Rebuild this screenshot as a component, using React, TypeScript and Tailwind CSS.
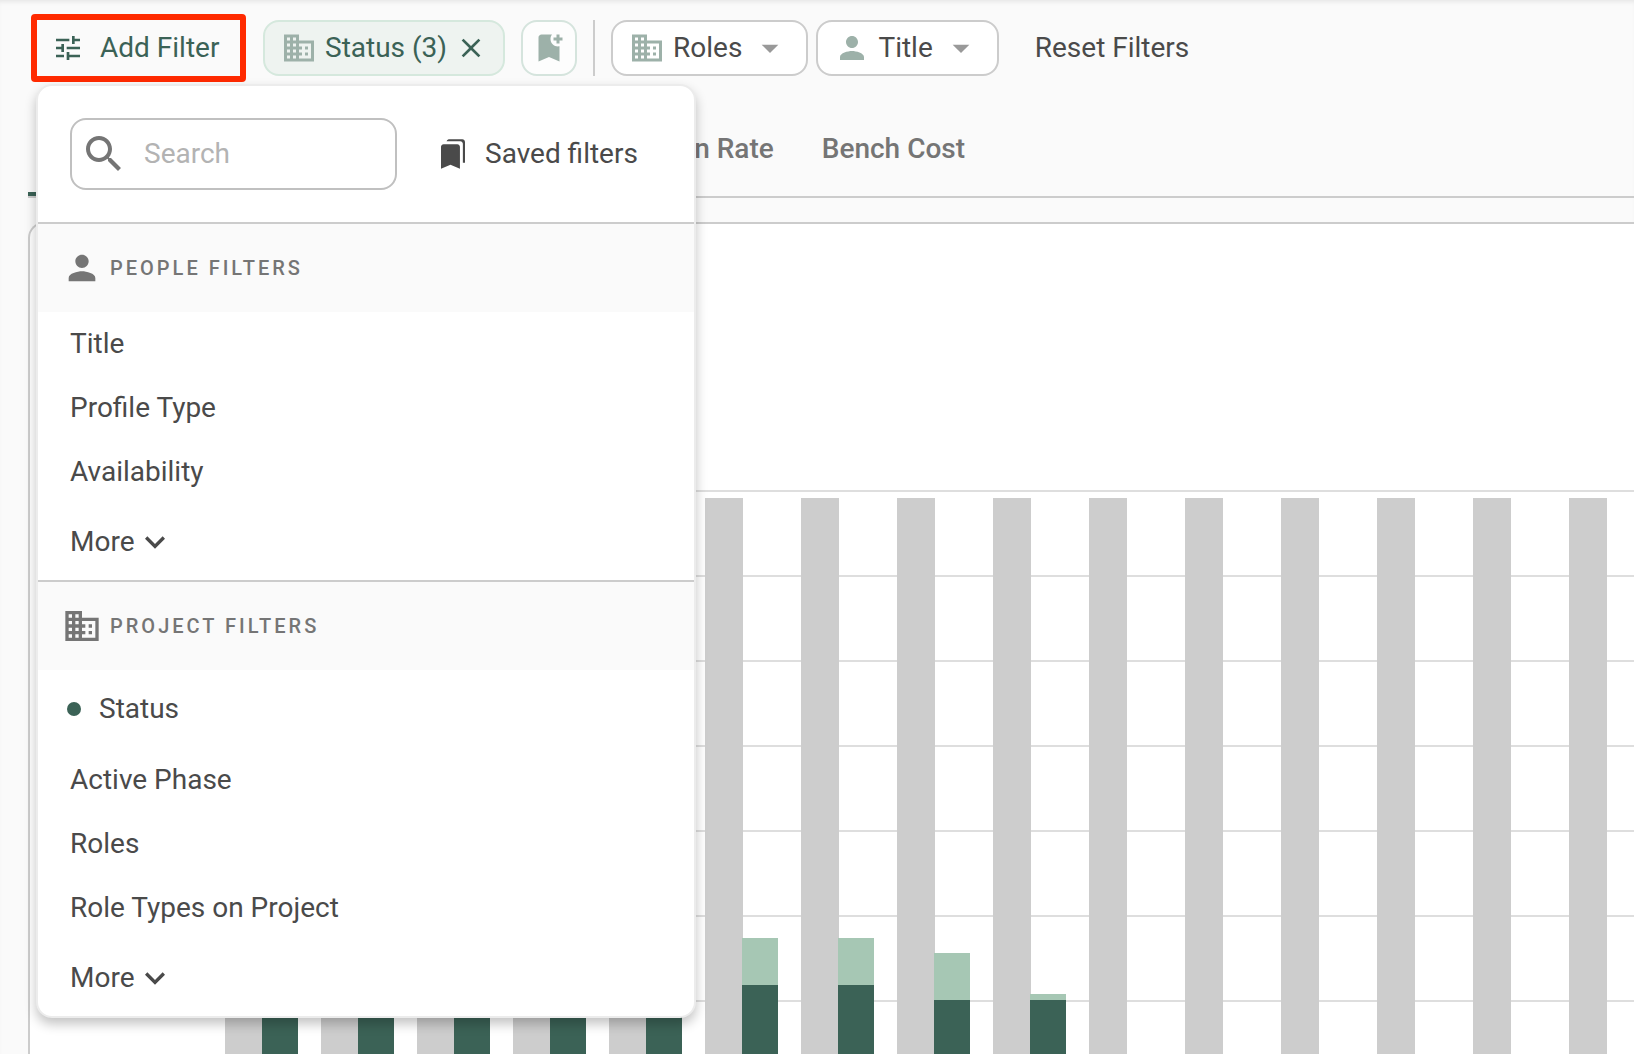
import React from "react";

type IconProps = { d: string; className?: string };

function Icon({ d, className = "" }: IconProps) {
  return (
    <svg viewBox="0 0 24 24" fill="currentColor" aria-hidden="true" className={`shrink-0 ${className}`}>
      <path d={d} />
    </svg>
  );
}

const ICONS = {
  tune: "M3 17v2h6v-2H3zM3 5v2h10V5H3zm10 16v-2h8v-2h-8v-2h-2v6h2zM7 9v2H3v2h4v2h2V9H7zm14 4v-2H11v2h10zm-6-4h2V7h4V5h-4V3h-2v6z",
  building:
    "M12 7V3H2v18h20V7H12zM6 19H4v-2h2v2zm0-4H4v-2h2v2zm0-4H4V9h2v2zm0-4H4V5h2v2zm4 12H8v-2h2v2zm0-4H8v-2h2v2zm0-4H8V9h2v2zm0-4H8V5h2v2zm10 12h-8v-2h2v-2h-2v-2h2v-2h-2V9h8v10zm-2-8h-2v2h2v-2zm0 4h-2v2h2v-2z",
  close:
    "M19 6.41L17.59 5 12 10.59 6.41 5 5 6.41 10.59 12 5 17.59 6.41 19 12 13.41 17.59 19 19 17.59 13.41 12z",
  bookmarkAdd:
    "M21 7h-2v2h-2V7h-2V5h2V3h2v2h2v2zm-2 14l-7-3-7 3V5c0-1.1.9-2 2-2h7c-.63.84-1 1.87-1 3 0 2.76 2.24 5 5 5 .34 0 .68-.03 1-.1V21z",
  person:
    "M12 12c2.21 0 4-1.79 4-4s-1.79-4-4-4-4 1.79-4 4 1.79 4 4 4zm0 2c-2.67 0-8 1.34-8 4v2h16v-2c0-2.66-5.33-4-8-4z",
  caret: "M7 10l5 5 5-5z",
  search:
    "M15.5 14h-.79l-.28-.27C15.41 12.59 16 11.11 16 9.5 16 5.91 13.09 3 9.5 3S3 5.91 3 9.5 5.91 16 9.5 16c1.61 0 3.09-.59 4.23-1.57l.27.28v.79l5 4.99L20.49 19l-4.99-5zm-6 0C7.01 14 5 11.99 5 9.5S7.01 5 9.5 5 14 7.01 14 9.5 11.99 14 9.5 14z",
  bookmarks:
    "M19.4 18.6H21V3c0-1.1-.9-2-2-2H9.5C8.4 1 7.6 1.5 7.2 2.4H17.4c1.1 0 2 .9 2 2v14.2zM15.2 4.6H5c-1.1 0-2 .9-2 2V23l7.1-3 7.1 3V6.6c0-1.1-.9-2-2-2z",
  chevron: "M16.59 8.59L12 13.17 7.41 8.59 6 10l6 6 6-6z",
};

function FilterSelect({ icon, label }: { icon: string; label: string }) {
  return (
    <button
      type="button"
      className="flex h-14 items-center gap-2 rounded-2xl border-2 border-[#cccccc] bg-white px-4 text-[#4a4a4a]"
    >
      <Icon d={icon} className="size-9 text-[#9db1a9]" />
      {label}
      <Icon d={ICONS.caret} className="size-10 text-[#999999]" />
    </button>
  );
}

function GroupHeader({ icon, label }: { icon: string; label: string }) {
  return (
    <h2 className="flex h-[90px] items-center gap-2 border-t-2 border-[#cccccc] bg-[#fafafa] pl-6 text-xl font-medium tracking-[3px] text-[#757575]">
      <Icon d={icon} className="size-10" />
      {label}
    </h2>
  );
}

function FilterItem({ label }: { label: string }) {
  return (
    <button type="button" className="flex h-16 items-center px-8 text-left">
      {label}
    </button>
  );
}

function MoreButton() {
  return (
    <button type="button" className="flex h-[76px] items-center px-8">
      More
      <Icon d={ICONS.chevron} className="size-10" />
    </button>
  );
}

function FilterMenu() {
  return (
    <section
      aria-label="Filters"
      className="absolute top-[84px] left-9 z-10 flex w-[660px] flex-col overflow-hidden rounded-2xl border-2 border-[#ececec] bg-white text-[#4a4a4a] shadow-[0_6px_12px_rgba(0,0,0,0.24)]"
    >
      <div className="flex items-center gap-10 px-8 py-8">
        <label className="flex h-[72px] w-[327px] items-center gap-4 rounded-2xl border-2 border-[#c0c0c0] pr-4 pl-2">
          <Icon d={ICONS.search} className="size-12 text-[#757575]" />
          <input
            type="search"
            aria-label="Search filters"
            placeholder="Search"
            className="w-full min-w-0 bg-transparent outline-none placeholder:text-[#b3b3b3]"
          />
        </label>
        <button type="button" className="flex items-center gap-4 whitespace-nowrap">
          <Icon d={ICONS.bookmarks} className="size-8" />
          Saved filters
        </button>
      </div>

      <GroupHeader icon={ICONS.person} label="PEOPLE FILTERS" />
      <FilterItem label="Title" />
      <FilterItem label="Profile Type" />
      <FilterItem label="Availability" />
      <MoreButton />

      <GroupHeader icon={ICONS.building} label="PROJECT FILTERS" />
      <button type="button" className="flex h-[78px] items-center gap-[18px] px-[29px]">
        <span className="size-[14px] rounded-full bg-[#3b6256]" />
        Status
      </button>
      <FilterItem label="Active Phase" />
      <FilterItem label="Roles" />
      <FilterItem label="Role Types on Project" />
      <MoreButton />
    </section>
  );
}

const GRID_TOP = 266;
const GRID_STEP = 85;
const BASELINE = 860;
const FIRST_BAR = 195;
const BAR_STEP = 96;

// Top edges of each week's capacity, tentative and confirmed bars.
const WEEKS: { capacity: number; tentative?: number; confirmed?: number }[] = [
  { capacity: 760, confirmed: 776 },
  { capacity: 760, confirmed: 776 },
  { capacity: 760, confirmed: 776 },
  { capacity: 760, confirmed: 776 },
  { capacity: 760, confirmed: 776 },
  { capacity: 274, tentative: 714, confirmed: 761 },
  { capacity: 274, tentative: 714, confirmed: 761 },
  { capacity: 274, tentative: 729, confirmed: 776 },
  { capacity: 274, tentative: 770, confirmed: 776 },
  ...Array.from({ length: 6 }, () => ({ capacity: 274 })),
];

function CapacityChart() {
  return (
    <svg className="block h-[860px] w-full" role="img" aria-label="Capacity chart">
      {Array.from({ length: 7 }, (_, i) => (
        <rect key={i} x="165" y={GRID_TOP + i * GRID_STEP} width="100%" height="2" fill="#dedede" />
      ))}
      {WEEKS.map((week, i) => {
        const x = FIRST_BAR + i * BAR_STEP;
        return (
          <g key={i}>
            <rect x={x} y={week.capacity} width="38" height={BASELINE - week.capacity} fill="#cdcdcd" />
            {week.tentative && (
              <rect x={x + 37} y={week.tentative} width="36" height={BASELINE - week.tentative} fill="#a6c7b4" />
            )}
            {week.confirmed && (
              <rect x={x + 37} y={week.confirmed} width="36" height={BASELINE - week.confirmed} fill="#3b6256" />
            )}
          </g>
        );
      })}
    </svg>
  );
}

export default function App() {
  return (
    <div className="relative flex h-screen flex-col overflow-hidden bg-[#fafafa] font-['Roboto',sans-serif] text-[28px] leading-8 text-[#4a4a4a] shadow-[inset_0_4px_4px_-2px_rgba(0,0,0,0.08)]">
      <header className="flex h-24 shrink-0 items-center pl-[31px] whitespace-nowrap">
        <button
          type="button"
          aria-expanded="true"
          className="flex h-[68px] w-[215px] items-center gap-4 rounded-sm border-6 border-[#ff2a00] pl-[15px] text-[#3b6256]"
        >
          <Icon d={ICONS.tune} className="size-8" />
          Add Filter
        </button>
        <div className="ml-[17px] flex items-center gap-4">
          <button
            type="button"
            className="flex h-14 items-center gap-2 rounded-2xl border-2 border-[#d5e8dd] bg-[#eef3f0] px-4 text-[#3b6256]"
          >
            <Icon d={ICONS.building} className="size-9 text-[#9db1a9]" />
            Status (3)
            <Icon d={ICONS.close} className="size-8" />
          </button>
          <button
            type="button"
            aria-label="Save filter"
            className="flex size-14 items-center justify-center rounded-2xl border-2 border-[#d5e4dd] bg-[#fdfdfd] text-[#9db1a9]"
          >
            <Icon d={ICONS.bookmarkAdd} className="size-9" />
          </button>
          <span className="h-14 w-0.5 bg-[#cccccc]" />
          <div className="flex items-center gap-2">
            <FilterSelect icon={ICONS.building} label="Roles" />
            <FilterSelect icon={ICONS.person} label="Title" />
          </div>
        </div>
        <button type="button" className="ml-9">
          Reset Filters
        </button>
      </header>

      <nav
        aria-label="Reports"
        className="ml-7 flex h-[102px] shrink-0 items-stretch gap-12 border-b-2 border-[#cccccc] font-medium whitespace-nowrap text-[#757575]"
      >
        <button type="button" aria-label="Capacity" className="w-[575px] border-b-4 border-[#3b6256]" />
        <button type="button" className="pt-1.5">
          Burn Rate
        </button>
        <button type="button" className="pt-1.5">
          Bench Cost
        </button>
      </nav>

      <main className="mt-6 ml-7 min-h-0 flex-1 overflow-hidden rounded-tl-2xl border-t-2 border-l-2 border-[#cccccc] bg-white">
        <CapacityChart />
      </main>

      <FilterMenu />
    </div>
  );
}
